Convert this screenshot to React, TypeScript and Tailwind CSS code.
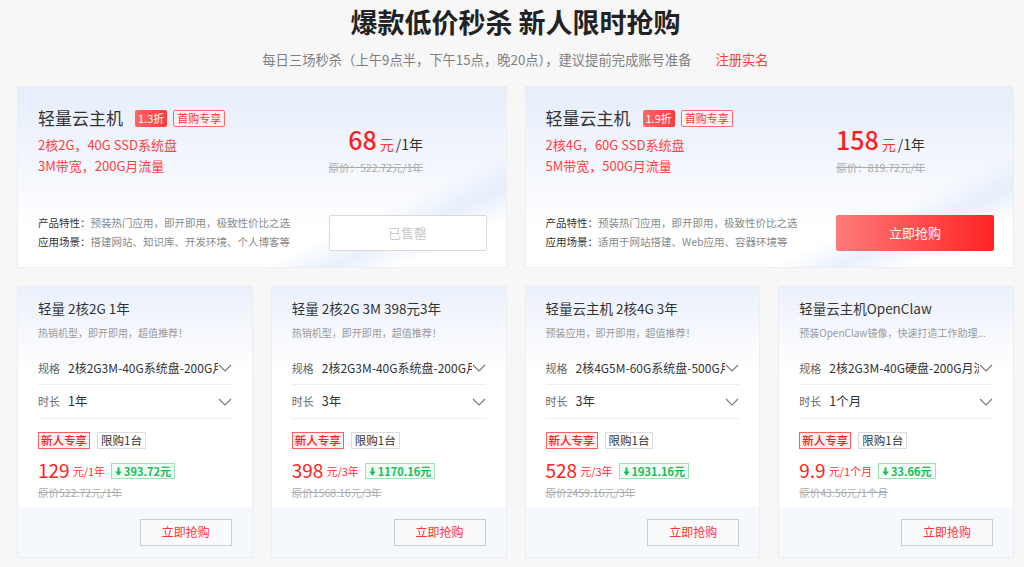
interface HotDeal {
  title: string;
  discount: string;
  specs: string[];
  price: string;
  unit: string;
  original: string;
  feature: string;
  scene: string;
  soldOut: boolean;
}

interface Plan {
  title: string;
  desc: string;
  spec: string;
  duration: string;
  price: string;
  unit: string;
  save: string;
  original: string;
}

const hotDeals: HotDeal[] = [
  {
    title: '轻量云主机',
    discount: '1.3折',
    specs: ['2核2G，40G SSD系统盘', '3M带宽，200G月流量'],
    price: '68',
    unit: '/1年',
    original: '原价：522.72元/1年',
    feature: '预装热门应用，即开即用，极致性价比之选',
    scene: '搭建网站、知识库、开发环境、个人博客等',
    soldOut: true,
  },
  {
    title: '轻量云主机',
    discount: '1.9折',
    specs: ['2核4G，60G SSD系统盘', '5M带宽，500G月流量'],
    price: '158',
    unit: '/1年',
    original: '原价：819.72元/年',
    feature: '预装热门应用，即开即用，极致性价比之选',
    scene: '适用于网站搭建、Web应用、容器环境等',
    soldOut: false,
  },
];

const plans: Plan[] = [
  {
    title: '轻量 2核2G 1年',
    desc: '热销机型，即开即用，超值推荐！',
    spec: '2核2G3M-40G系统盘-200G月流量',
    duration: '1年',
    price: '129',
    unit: '元/1年',
    save: '393.72元',
    original: '原价522.72元/1年',
  },
  {
    title: '轻量 2核2G 3M 398元3年',
    desc: '热销机型，即开即用，超值推荐！',
    spec: '2核2G3M-40G系统盘-200G月流量',
    duration: '3年',
    price: '398',
    unit: '元/3年',
    save: '1170.16元',
    original: '原价1568.16元/3年',
  },
  {
    title: '轻量云主机 2核4G 3年',
    desc: '预装应用，即开即用，超值推荐！',
    spec: '2核4G5M-60G系统盘-500G月流量',
    duration: '3年',
    price: '528',
    unit: '元/3年',
    save: '1931.16元',
    original: '原价2459.16元/3年',
  },
  {
    title: '轻量云主机OpenClaw',
    desc: '预装OpenClaw镜像，快速打造工作助理...',
    spec: '2核2G3M-40G硬盘-200G月流量',
    duration: '1个月',
    price: '9.9',
    unit: '元/1个月',
    save: '33.66元',
    original: '原价43.56元/1个月',
  },
];

function DownArrow() {
  return (
    <svg width="7" height="9" viewBox="0 0 7 10" className="mr-[2px]">
      <rect x="2.4" y="0.5" width="2.2" height="5" fill="#1fb85a" />
      <polygon points="0,5 7,5 3.5,9.8" fill="#1fb85a" />
    </svg>
  );
}

function Chevron() {
  return (
    <svg width="14" height="8" viewBox="0 0 14 8" className="shrink-0">
      <polyline points="1,1 7,7 13,1" fill="none" stroke="#777" strokeWidth="1.1" />
    </svg>
  );
}

function HotDealCard({ deal }: { deal: HotDeal }) {
  return (
    <div className="flex h-[182px] border border-[#eceef2] bg-[linear-gradient(155deg,transparent_72%,rgba(214,228,250,0.55)_80%,transparent_88%),linear-gradient(180deg,#e6eefb_0%,#f4f7fd_45%,#ffffff_78%)] pl-[20px] pr-[19px] pt-[21px] pb-[16px]">
      <div className="flex flex-1 flex-col justify-between">
        <div>
          <div className="flex items-center h-[20px]">
            <span className="text-[17px] leading-[20px] text-[#333]">{deal.title}</span>
            <span className="ml-[12px] h-[17px] px-[3px] rounded-[2px] bg-[linear-gradient(90deg,#ff6666,#ff3b3b)] text-[11px] leading-[17px] text-white">
              {deal.discount}
            </span>
            <span className="ml-[6px] h-[17px] px-[3px] rounded-[2px] border border-[#ff6b6b] bg-[#fff1f1] text-[11px] leading-[15px] text-[#ff3333]">
              首购专享
            </span>
          </div>
          <div className="mt-[6px]">
            {deal.specs.map((s) => (
              <div key={s} className="text-[13px] leading-[21px] text-[#ff4040]">
                {s}
              </div>
            ))}
          </div>
        </div>
        <div className="text-[10.5px] leading-[19px]">
          <div>
            <span className="text-[#333]">产品特性：</span>
            <span className="text-[#8a8a8a]">{deal.feature}</span>
          </div>
          <div>
            <span className="text-[#333]">应用场景：</span>
            <span className="text-[#8a8a8a]">{deal.scene}</span>
          </div>
        </div>
      </div>
      <div className="flex w-[158px] flex-col justify-between">
        <div className="pt-[16px]">
          <div className="inline-block text-right">
            <div className="leading-[30px] whitespace-nowrap">
              <span className="text-[25px] font-medium text-[#ff1f1f]">{deal.price}</span>
              <span className="ml-[3px] text-[14px] text-[#ff3333]">元</span>
              <span className="ml-[2px] text-[14px] text-[#333]">{deal.unit}</span>
            </div>
            <div className="text-[10.5px] leading-[18px] text-[#aaa] line-through whitespace-nowrap">
              {deal.original}
            </div>
          </div>
        </div>
        {deal.soldOut ? (
          <button className="h-[36px] w-full rounded-[2px] border border-[#d9d9d9] bg-white text-[13px] text-[#c8c8c8]">
            已售罄
          </button>
        ) : (
          <button className="h-[36px] w-full rounded-[2px] bg-[linear-gradient(90deg,#ff7a7a,#ff2424)] text-[13px] text-white">
            立即抢购
          </button>
        )}
      </div>
    </div>
  );
}

function PlanCard({ plan }: { plan: Plan }) {
  return (
    <div className="flex h-[272px] flex-col border border-[#eceef2] bg-white">
      <div className="flex-1 bg-[linear-gradient(180deg,#eaf0fb_0%,#f7f9fd_22%,#ffffff_40%)] px-[20px] pt-[10px]">
        <div className="text-[13.5px] leading-[22px] text-[#333] whitespace-nowrap">{plan.title}</div>
        <div className="mt-[5px] text-[10px] leading-[18px] text-[#999] whitespace-nowrap overflow-hidden">
          {plan.desc}
        </div>
        <div className="mt-[10px] flex h-[33px] items-center border-b border-[#eeeeee]">
          <span className="text-[11px] text-[#666]">规格</span>
          <span className="ml-[8px] flex-1 overflow-hidden whitespace-nowrap text-[12px] text-[#333]">
            {plan.spec}
          </span>
          <Chevron />
        </div>
        <div className="flex h-[34px] items-center border-b border-[#eeeeee]">
          <span className="text-[11px] text-[#666]">时长</span>
          <span className="ml-[8px] flex-1 text-[12.5px] text-[#333]">{plan.duration}</span>
          <Chevron />
        </div>
        <div className="mt-[13px] flex items-center gap-[7px]">
          <span className="h-[17px] border border-[#ff5c5c] bg-[#fff0f0] px-[2px] text-[11.5px] leading-[15px] font-medium text-[#f52222]">
            新人专享
          </span>
          <span className="h-[17px] border border-[#dddddd] bg-white px-[3px] text-[11.5px] leading-[15px] text-[#333]">
            限购1台
          </span>
        </div>
        <div className="mt-[9px] flex items-center h-[24px] whitespace-nowrap">
          <span className="text-[19px] leading-[24px] text-[#ff2020]">{plan.price}</span>
          <span className="ml-[3px] mt-[3px] text-[11px] text-[#ff3333]">{plan.unit}</span>
          <span className="ml-[6px] mt-[2px] flex h-[16px] items-center border border-[#9be3b5] bg-[#f1fcf5] px-[3px] text-[11px] font-semibold text-[#1fb85a]">
            <DownArrow />
            {plan.save}
          </span>
        </div>
        <div className="mt-[2px] text-[10.5px] leading-[18px] text-[#aaa] line-through whitespace-nowrap">
          {plan.original}
        </div>
      </div>
      <div className="flex h-[50px] items-center justify-end bg-[#f5f8fc] px-[20px]">
        <button className="h-[27px] w-[92px] border border-[#cccccc] bg-[#f9fafc] text-[12px] text-[#ff3333]">
          立即抢购
        </button>
      </div>
    </div>
  );
}

export default function App() {
  return (
    <div className="min-h-[567px] bg-[#f7f7f8] pl-[17px] pr-[10px] pt-[6px] font-['Noto_Sans_CJK_SC',sans-serif]">
      <h1 className="text-center text-[27px] leading-[32px] font-bold text-[#222]">
        爆款低价秒杀 新人限时抢购
      </h1>
      <p className="mt-[12px] text-center text-[13.3px] leading-[20px] text-[#808080]">
        每日三场秒杀（上午9点半，下午15点，晚20点），建议提前完成账号准备
        <span className="ml-[24px] text-[#ff3b3b]">注册实名</span>
      </p>
      <div className="mt-[16px] grid grid-cols-2 gap-[18px]">
        {hotDeals.map((d) => (
          <HotDealCard key={d.discount} deal={d} />
        ))}
      </div>
      <div className="mt-[18px] grid grid-cols-4 gap-[18px]">
        {plans.map((p) => (
          <PlanCard key={p.title} plan={p} />
        ))}
      </div>
    </div>
  );
}
